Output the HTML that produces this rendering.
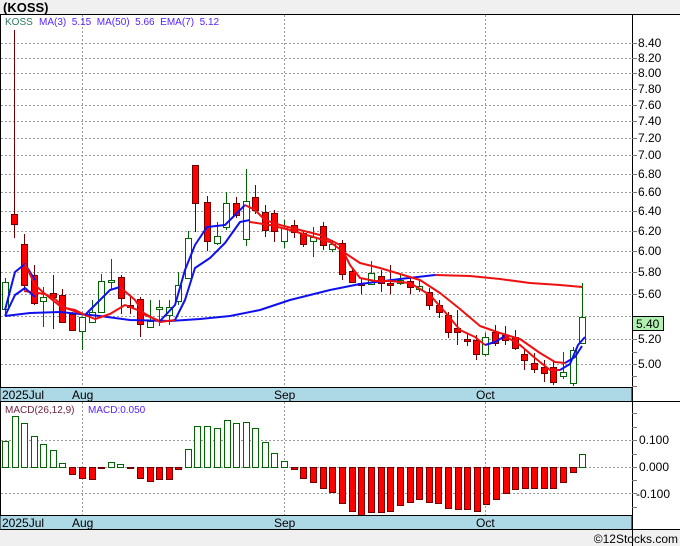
<!DOCTYPE html>
<html><head><meta charset="utf-8"><style>
body{margin:0;width:680px;height:546px;overflow:hidden;background:#f0f0f0;font-family:"Liberation Sans",sans-serif}
svg{display:block}
</style></head><body>
<svg id="s" width="680" height="546" xmlns="http://www.w3.org/2000/svg" font-family="Liberation Sans, sans-serif">
<rect x="0" y="0" width="680" height="546" fill="#f0f0f0"/>
<rect x="0" y="14" width="680" height="516" fill="#fff"/>
<g id="grid" stroke="#999" stroke-dasharray="2,2" stroke-width="1"></g>
<g id="cd"></g>
<g fill="none" stroke-width="2" stroke-linejoin="round">
<polyline stroke="#1010ee" points="5,316 30,313 60,312 100,316 130,320 170,321 200,319 230,316 260,310 290,300 330,290 360,284 400,279 435,275"/>
<polyline stroke="#ee1010" points="435,275 470,276 500,279 530,283 560,285 582,287"/>
<polyline stroke="#ee1010" points="24,291 45,294 60,306 80,313 95,319 110,314 125,305 140,311 160,322 175,320"/>
<polyline stroke="#1010ee" points="5,316 15,295 25,288 35,297"/>
<polyline stroke="#1010ee" points="175,320 185,300 195,268 210,258 225,243 240,222 250,220"/>
<polyline stroke="#ee1010" points="250,222 270,225 290,230 310,236 330,242 345,253 360,263 380,268 400,274 420,280 440,293 460,309 480,326 500,333 520,339 540,353 555,362 565,363"/>
<polyline stroke="#1010ee" points="565,363 575,357 582,346"/>
<polyline stroke="#1010ee" points="5,310 15,272 25,264 35,280"/>
<polyline stroke="#ee1010" points="25,264 35,285 45,294 55,299 65,308 75,310 85,315"/>
<polyline stroke="#1010ee" points="85,315 100,300 110,290 120,287"/>
<polyline stroke="#ee1010" points="120,287 135,300 145,315 160,321"/>
<polyline stroke="#1010ee" points="160,321 175,305 185,270 195,245 207,227 225,225 245,205"/>
<polyline stroke="#ee1010" points="245,205 255,210 265,220 280,225 300,230 320,235 340,245 350,265 360,278 375,281 390,281 410,283 430,295 445,312 460,330 475,337 485,345"/>
<polyline stroke="#1010ee" points="485,345 495,342 505,336"/>
<polyline stroke="#ee1010" points="505,336 520,345 535,358 550,370 560,370"/>
<polyline stroke="#1010ee" points="560,370 570,364 578,345 585,337"/>
</g>
<g id="mc"></g>
<!-- frame -->
<line x1="0.5" y1="14" x2="0.5" y2="530" stroke="#000"/>
<line x1="0" y1="14.5" x2="680" y2="14.5" stroke="#000"/>
<line x1="632.5" y1="14" x2="632.5" y2="546" stroke="#000"/>
<rect x="0" y="387.5" width="632" height="14" fill="#add8e6" stroke="#000"/>
<rect x="0" y="515.5" width="632" height="14" fill="#add8e6" stroke="#000"/>
<line x1="632" y1="401.5" x2="680" y2="401.5" stroke="#000"/>
<line x1="632" y1="529.5" x2="680" y2="529.5" stroke="#000"/>
<g id="tk" stroke="#777"></g>
<g font-size="12" fill="#000">
<text x="2" y="399">2025Jul</text><text x="72" y="399">Aug</text><text x="274" y="399">Sep</text><text x="476" y="399">Oct</text>
<text x="2" y="527">2025Jul</text><text x="72" y="527">Aug</text><text x="274" y="527">Sep</text><text x="476" y="527">Oct</text>
</g>
<g font-size="12" fill="#000">
<text x="638" y="47">8.40</text><text x="638" y="62">8.20</text><text x="638" y="77">8.00</text><text x="638" y="93">7.80</text><text x="638" y="109">7.60</text><text x="638" y="125">7.40</text><text x="638" y="142">7.20</text><text x="638" y="159">7.00</text><text x="638" y="178">6.80</text><text x="638" y="196">6.60</text><text x="638" y="215">6.40</text><text x="638" y="235">6.20</text><text x="638" y="255">6.00</text><text x="638" y="276">5.80</text><text x="638" y="298">5.60</text><text x="638" y="343">5.20</text><text x="638" y="368">5.00</text>
<text x="639" y="444">0.100</text><text x="639" y="471">0.000</text><text x="636" y="498">-0.100</text>
</g>
<rect x="632.5" y="316.5" width="31" height="14" fill="#b0f0b0" stroke="#000"/>
<text x="636" y="328" font-size="12">5.40</text>
<text x="3" y="12" font-size="13" font-weight="bold">(KOSS)</text>
<text x="5" y="25" font-size="10" fill="#2a7a5a">KOSS</text>
<text x="39" y="25" font-size="10" fill="#5522ff" xml:space="preserve">MA(3)  5.15  MA(50)  5.66  EMA(7)  5.12</text>
<text x="5" y="413" font-size="10" fill="#702040">MACD(26,12,9)</text>
<text x="88" y="413" font-size="10" fill="#5522ff">MACD:0.050</text>
<text x="678" y="543" font-size="12" text-anchor="end">©12Stocks.com</text>
</svg>
<script>
var NS="http://www.w3.org/2000/svg";
function el(p,t,a){var e=document.createElementNS(NS,t);for(var k in a)e.setAttribute(k,a[k]);document.getElementById(p).appendChild(e);return e;}
// grid
[43,58,73,89,105,121,138,155,174,192,211,231,251,272,294,316,339,364].forEach(function(y){el("grid","line",{x1:1,x2:632,y1:y+.5,y2:y+.5});});
[440,467,493].forEach(function(y){el("grid","line",{x1:1,x2:632,y1:y+.5,y2:y+.5});});
[82,284,485].forEach(function(x){el("grid","line",{x1:x+.5,x2:x+.5,y1:15,y2:387});el("grid","line",{x1:x+.5,x2:x+.5,y1:402,y2:515});});
[43,58,73,89,105,121,138,155,174,192,211,231,251,272,294,316,339,364,352,376,386].forEach(function(y){el("tk","line",{x1:632,x2:637,y1:y+.5,y2:y+.5});});
[413,427,440,454,467,480,493,507].forEach(function(y){el("tk","line",{x1:632,x2:637,y1:y+.5,y2:y+.5});});
// candles: x, wickTop, wickBot, bodyTop, bodyBot, g/r
var C=[[5,278,316,282,309,"g"],[14,30,238,214,224,"r"],[24,234,290,244,285,"r"],[34,265,305,275,303,"r"],[43,287,327,297,301,"g"],[53,275,329,293,297,"r"],[62,289,323,295,322,"r"],[72,312,331,314,330,"r"],[82,317,350,317,331,"g"],[92,300,322,312,322,"g"],[101,274,312,281,312,"g"],[111,259,290,280,282,"g"],[121,275,314,277,298,"r"],[130,296,314,305,307,"r"],[140,297,337,299,324,"r"],[150,300,328,321,327,"g"],[159,300,326,307,309,"g"],[169,300,325,307,315,"g"],[178,272,305,285,301,"g"],[188,231,278,238,278,"g"],[195,165,232,165,203,"r"],[207,196,251,202,241,"r"],[217,222,245,236,243,"g"],[226,192,230,203,227,"g"],[236,197,218,203,215,"r"],[246,169,246,201,239,"g"],[255,185,214,197,210,"r"],[265,205,237,212,230,"r"],[274,210,242,213,231,"r"],[284,220,248,228,241,"g"],[294,220,238,225,232,"r"],[303,230,247,233,244,"r"],[313,227,257,237,241,"g"],[323,222,250,226,245,"r"],[332,240,252,244,249,"g"],[342,240,280,243,274,"r"],[352,268,283,271,282,"r"],[361,278,294,283,285,"r"],[371,261,285,273,284,"g"],[381,270,292,276,283,"r"],[390,265,294,283,285,"r"],[400,275,285,280,283,"g"],[410,278,294,281,287,"r"],[419,280,292,286,289,"g"],[429,288,310,292,305,"r"],[439,300,318,305,312,"r"],[448,312,338,315,332,"r"],[457,310,345,328,332,"r"],[467,333,346,339,341,"r"],[476,335,360,340,354,"r"],[485,333,356,337,354,"g"],[495,325,346,332,343,"r"],[505,326,345,335,340,"r"],[515,330,350,337,348,"r"],[524,348,370,354,360,"r"],[534,353,373,363,369,"r"],[544,360,382,367,373,"r"],[553,360,385,367,382,"r"],[563,352,379,372,376,"g"],[573,347,386,350,383,"g"],[582,283,343,317,343,"g"]];
C.forEach(function(c){var g=c[5]=="g";var wc=g?"#006400":"#700000";
el("cd","line",{x1:c[0]+.5,x2:c[0]+.5,y1:c[1],y2:c[2],stroke:wc,"stroke-width":1});
el("cd","rect",{x:c[0]-2.5,y:c[3]+.5,width:6,height:Math.max(1,c[4]-c[3]),fill:g?"#fff":"#f00",stroke:wc,"stroke-width":1});});
// macd
var M=[[5,441],[15,416],[24,423],[34,436],[43,444],[53,450],[62,463],[72,474],[82,478],[92,479],[101,468],[111,462],[120,464],[130,468],[140,478],[150,481],[159,479],[169,479],[178,469],[188,449],[197,426],[207,426],[217,428],[227,420],[236,423],[246,422],[255,428],[265,442],[274,453],[284,461],[294,469],[303,478],[313,482],[323,488],[332,492],[342,503],[352,511],[361,515],[371,512],[381,512],[390,511],[400,505],[410,502],[419,499],[429,502],[438,503],[448,508],[458,509],[467,509],[477,511],[486,504],[496,499],[506,493],[515,489],[525,488],[534,488],[544,488],[553,488],[563,482],[573,472],[582,454]];
M.forEach(function(m){var z=467,g=m[1]<z;var t=Math.min(m[1],z),h=Math.max(1,Math.abs(m[1]-z));
el("mc","rect",{x:m[0]-2.5,y:t+.5,width:6,height:h,fill:g?"#fff":"#f00",stroke:g?"#006400":"#700000","stroke-width":1});});
</script>
</body></html>
